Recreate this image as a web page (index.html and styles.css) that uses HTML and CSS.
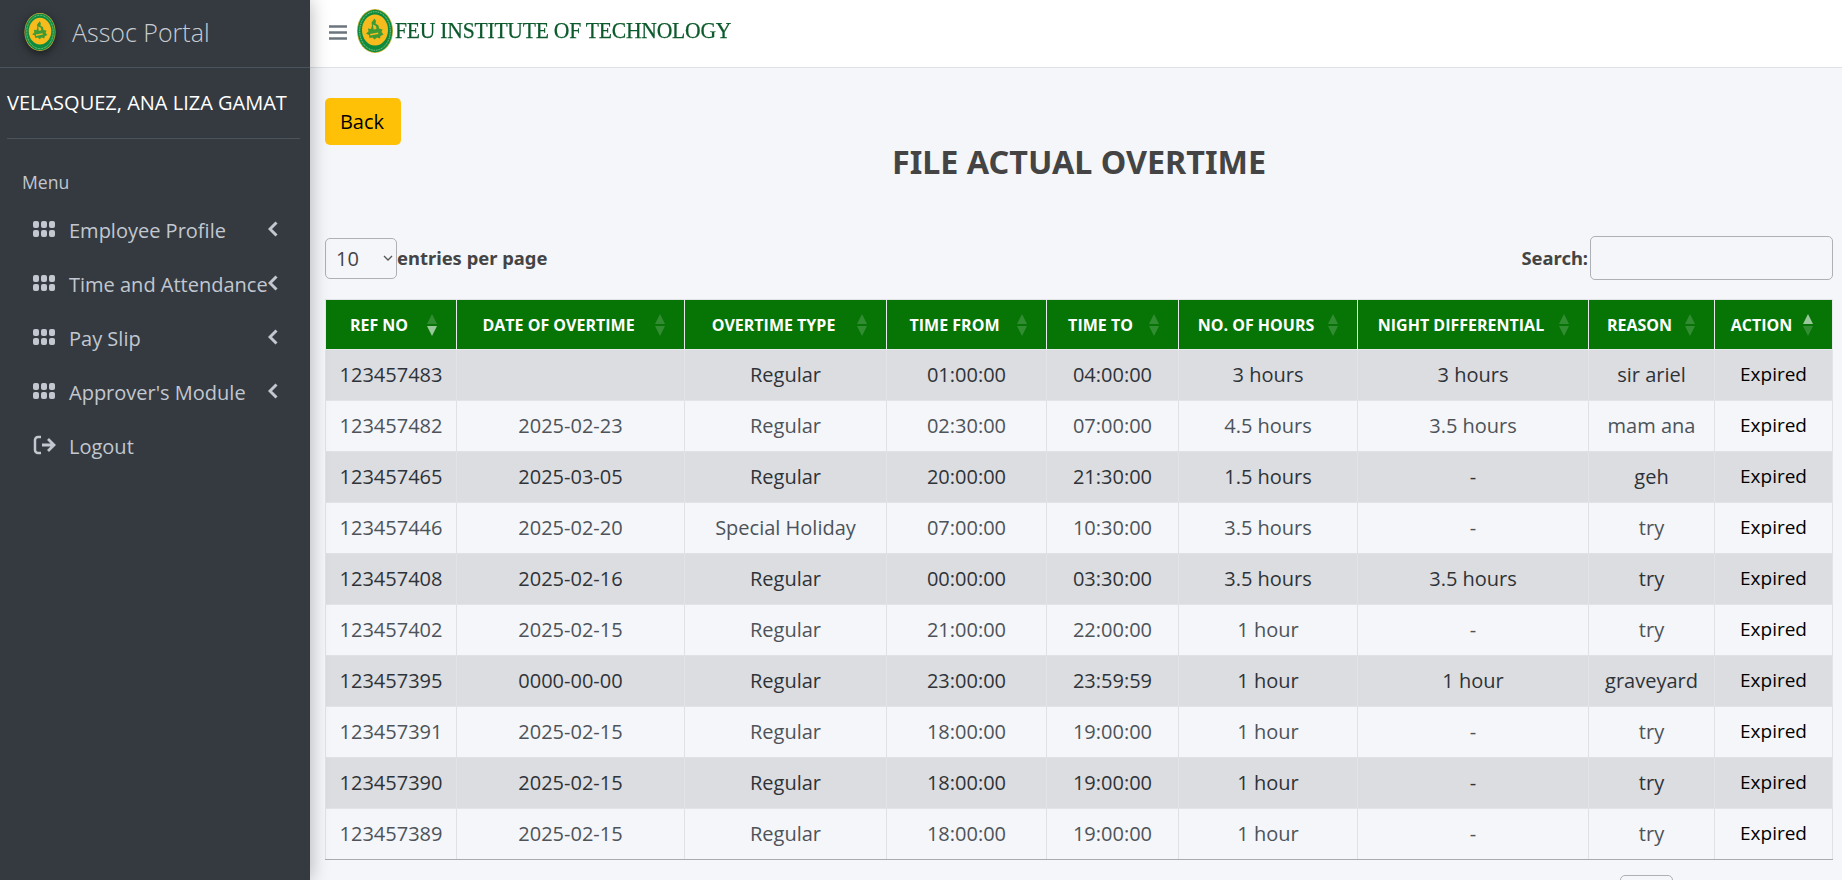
FILE: index.html
```html
<!DOCTYPE html>
<html lang="en">
<head>
<meta charset="utf-8">
<title>File Actual Overtime</title>
<link rel="stylesheet" href="styles.css">
</head>
<body>
<svg class="defs" width="0" height="0" aria-hidden="true">
  <symbol id="seal" viewBox="0 0 36 44">
    <ellipse cx="18" cy="22" rx="18" ry="22" fill="#c9b13a"/>
    <ellipse cx="18" cy="22" rx="17.300" ry="21.200" fill="#0f8a3c"/>
    <ellipse cx="18" cy="21" rx="13" ry="15.500" fill="#f7bb1e"/>
    <path d="M17.500 9.500l1.500 2.500-.5 2.500 3 2 .5 3 3.500 1-1 2.500 2 2.500-3 1.500-.5 2.500-3-1-2.500 2-2-2-3 .5-.5-3-3-1.500 2.500-2-.5-3 3 .5 1-3.500-.5-3z" fill="#3d9a35"/>
    <path d="M16 15.500l3 1.500.5 3-3 .5zM13 25l8-1.500.5 1.500-8 1.500z" fill="#f7bb1e"/>
    <ellipse cx="18" cy="22" rx="15.300" ry="19.300" fill="none" stroke="#d9e9c4" stroke-width=".8" stroke-dasharray=".9 .9"/>
  </symbol>
  <symbol id="grid" viewBox="0 0 22 16">
    <rect x="0" y="0" width="6" height="7" rx="2"/><rect x="8" y="0" width="6" height="7" rx="2"/><rect x="16" y="0" width="6" height="7" rx="2"/>
    <rect x="0" y="9" width="6" height="7" rx="2"/><rect x="8" y="9" width="6" height="7" rx="2"/><rect x="16" y="9" width="6" height="7" rx="2"/>
  </symbol>
  <symbol id="chev" viewBox="0 0 10 16"><path d="M8.500 1.500L2 8l6.500 6.500" fill="none" stroke="currentColor" stroke-width="3"/></symbol>
</svg>
<div class="app">
  <aside class="sidebar">
    <div class="brand">
      <svg class="brand-logo"><use href="#seal"/></svg>
      <span class="brand-text">Assoc Portal</span>
    </div>
    <div class="user">VELASQUEZ, ANA LIZA GAMAT</div>
    <nav class="nav">
      <div class="nav-head">Menu</div>
      <a class="nav-item"><svg class="nav-icon"><use href="#grid"/></svg><span class="nav-label">Employee Profile</span><svg class="nav-chev"><use href="#chev"/></svg></a>
      <a class="nav-item"><svg class="nav-icon"><use href="#grid"/></svg><span class="nav-label">Time and Attendance</span><svg class="nav-chev"><use href="#chev"/></svg></a>
      <a class="nav-item"><svg class="nav-icon"><use href="#grid"/></svg><span class="nav-label">Pay Slip</span><svg class="nav-chev"><use href="#chev"/></svg></a>
      <a class="nav-item"><svg class="nav-icon"><use href="#grid"/></svg><span class="nav-label">Approver's Module</span><svg class="nav-chev"><use href="#chev"/></svg></a>
      <a class="nav-item"><svg class="nav-icon logout" viewBox="0 0 24 20"><path d="M8 2H5a3 3 0 0 0-3 3v10a3 3 0 0 0 3 3h3" fill="none" stroke="currentColor" stroke-width="2.500"/><path d="M9 10h12M15 4l6 6-6 6" fill="none" stroke="currentColor" stroke-width="2.800"/></svg><span class="nav-label nav-label-logout">Logout</span></a>
    </nav>
  </aside>
  <div class="main">
    <header class="topbar">
      <svg class="burger" viewBox="0 0 18 15"><path d="M0 1.500h18M0 7.500h18M0 13.500h18" stroke="#6c757d" stroke-width="2.500"/></svg>
      <svg class="top-logo"><use href="#seal"/></svg>
      <span class="top-name">FEU INSTITUTE OF TECHNOLOGY</span>
    </header>
    <main class="content">
      <button class="back">Back</button>
      <h1 class="title">FILE ACTUAL OVERTIME</h1>
      <div class="controls">
        <label class="entries"><span class="fake-select">10<svg class="sel-chev" viewBox="0 0 10 6"><path d="M1 1l4 4 4-4" fill="none" stroke="#555" stroke-width="1.300"/></svg></span><span class="ctl-text">entries per page</span></label>
        <label class="search"><span class="ctl-text">Search:</span><input class="search-input" type="text"></label>
      </div>
      <table class="grid">
        <thead>
          <tr>
            <th class="sort-down">REF NO</th>
            <th>DATE OF OVERTIME</th>
            <th>OVERTIME TYPE</th>
            <th>TIME FROM</th>
            <th>TIME TO</th>
            <th>NO. OF HOURS</th>
            <th>NIGHT DIFFERENTIAL</th>
            <th>REASON</th>
            <th class="sort-up">ACTION</th>
          </tr>
        </thead>
        <tbody>
          <tr><td>123457483</td><td></td><td>Regular</td><td>01:00:00</td><td>04:00:00</td><td>3 hours</td><td>3 hours</td><td>sir ariel</td><td class="act">Expired</td></tr>
          <tr><td>123457482</td><td>2025-02-23</td><td>Regular</td><td>02:30:00</td><td>07:00:00</td><td>4.5 hours</td><td>3.5 hours</td><td>mam ana</td><td class="act">Expired</td></tr>
          <tr><td>123457465</td><td>2025-03-05</td><td>Regular</td><td>20:00:00</td><td>21:30:00</td><td>1.5 hours</td><td>-</td><td>geh</td><td class="act">Expired</td></tr>
          <tr><td>123457446</td><td>2025-02-20</td><td>Special Holiday</td><td>07:00:00</td><td>10:30:00</td><td>3.5 hours</td><td>-</td><td>try</td><td class="act">Expired</td></tr>
          <tr><td>123457408</td><td>2025-02-16</td><td>Regular</td><td>00:00:00</td><td>03:30:00</td><td>3.5 hours</td><td>3.5 hours</td><td>try</td><td class="act">Expired</td></tr>
          <tr><td>123457402</td><td>2025-02-15</td><td>Regular</td><td>21:00:00</td><td>22:00:00</td><td>1 hour</td><td>-</td><td>try</td><td class="act">Expired</td></tr>
          <tr><td>123457395</td><td>0000-00-00</td><td>Regular</td><td>23:00:00</td><td>23:59:59</td><td>1 hour</td><td>1 hour</td><td>graveyard</td><td class="act">Expired</td></tr>
          <tr><td>123457391</td><td>2025-02-15</td><td>Regular</td><td>18:00:00</td><td>19:00:00</td><td>1 hour</td><td>-</td><td>try</td><td class="act">Expired</td></tr>
          <tr><td>123457390</td><td>2025-02-15</td><td>Regular</td><td>18:00:00</td><td>19:00:00</td><td>1 hour</td><td>-</td><td>try</td><td class="act">Expired</td></tr>
          <tr><td>123457389</td><td>2025-02-15</td><td>Regular</td><td>18:00:00</td><td>19:00:00</td><td>1 hour</td><td>-</td><td>try</td><td class="act">Expired</td></tr>
        </tbody>
      </table>
      <div class="pager"><span class="pager-box"></span></div>
    </main>
  </div>
</div>
</body>
</html>
```
FILE: styles.css
```css
* { box-sizing: border-box; }
html, body { margin: 0; height: 100%; overflow: hidden; }
body { font-family: "Open Sans", "Noto Sans", sans-serif; font-size: 20px; color: #212529; background: #f4f6f9; }
.defs { position: absolute; }
.app { display: flex; height: 880px; }
.sidebar { width: 310px; flex: none; background: #343a40; color: #c2c7d0; box-shadow: 0 0 18px rgba(0,0,0,.3); z-index: 2; }
.brand { height: 68px; display: flex; align-items: center; padding-left: 24px; border-bottom: 1px solid #4b545c; }
.brand-logo { width: 32px; height: 38px; margin-top: -4px; filter: drop-shadow(0 3px 5px rgba(0,0,0,.5)); }
.brand-text { margin-left: 16px; margin-top: -3px; font-weight: 300; font-size: 25px; color: #c8ccd2; white-space: nowrap; }
.user { margin: 0 10px 0 7px; height: 71px; line-height: 69px; border-bottom: 1px solid #4b545c; color: #fff; font-size: 20px; white-space: nowrap; }
.nav { padding-top: 29px; }
.nav-head { padding-left: 22px; font-size: 17.600px; line-height: 28px; height: 35px; }
.nav-item { display: flex; align-items: center; height: 54px; padding-left: 33px; font-size: 20px; color: #c2c7d0; }
.nav-icon { width: 22px; height: 16px; fill: #c2c7d0; margin-top: -2px; flex: none; }
.nav-icon.logout { width: 24px; height: 20px; }
.nav-label { margin-left: 14px; white-space: nowrap; width: 199px; }
.nav-label-logout { margin-left: 12px; }
.nav-chev { width: 10px; height: 16px; color: #c2c7d0; margin-top: -2px; flex: none; }
.main { flex: 1; min-width: 0; display: flex; flex-direction: column; }
.topbar { height: 68px; flex: none; background: #fff; border-bottom: 1px solid #dee2e6; display: flex; align-items: center; padding-left: 19px; }
.burger { width: 18px; height: 15px; flex: none; margin-top: -2px; }
.top-logo { width: 36px; height: 44px; margin-left: 10px; margin-top: -6px; flex: none; }
.top-name { margin-top: -5px; margin-left: 2px; font-family: "Liberation Serif", serif; font-size: 23px; color: #0c5a2c; letter-spacing: -.25px; white-space: nowrap; transform: scaleX(.94); transform-origin: left center; -webkit-text-stroke: .25px #0c5a2c; }
.content { padding: 30px 9px 0 15px; }
.back { display: block; width: 76px; height: 47px; background: #ffc107; border: 0; border-radius: 5px; font: 20px "Open Sans", sans-serif; color: #000; padding: 0 2px 0 0; }
.title { margin: -2px 0 0; height: 93px; text-align: center; font-family: "Noto Sans", sans-serif; font-weight: 700; font-size: 32.300px; line-height: 36px; color: #444; }
.controls { display: flex; justify-content: space-between; align-items: center; height: 44px; font-family: "Noto Sans", sans-serif; font-weight: 700; font-size: 18.400px; color: #444; }
.entries, .search { display: flex; align-items: center; }
.ctl-text { margin-top: -2px; }
.fake-select { display: flex; align-items: center; justify-content: space-between; width: 72px; height: 41px; border: 1px solid #adb0b5; border-radius: 5px; padding: 0 3px 0 10px; font: 20px "Open Sans", sans-serif; font-weight: 400; color: #444; }
.sel-chev { width: 10px; height: 6px; }
.search-input { width: 243px; height: 44px; margin-left: 2px; border: 1px solid #adb0b5; border-radius: 5px; background: #f4f6f9; }
.grid { margin-top: 19px; width: 1507px; table-layout: fixed; border-collapse: collapse; }
.grid th { position: relative; height: 50px; background: #067506; color: #fff; font-size: 16px; font-weight: 700; text-align: center; border: 1px solid #e8e9ec; border-top-color: #e0e2e6; padding: 0 32px 0 8px; white-space: nowrap; }
.grid th::before, .grid th::after { content: ""; position: absolute; right: 19px; width: 0; height: 0; border-left: 5px solid transparent; border-right: 5px solid transparent; }
.grid th::before { top: 14px; border-bottom: 10px solid rgba(255,255,255,.18); }
.grid th::after { top: 26px; border-top: 10px solid rgba(255,255,255,.18); }
.grid th.sort-down::after { border-top-color: rgba(255,255,255,.6); }
.grid th.sort-up::before { border-bottom-color: rgba(255,255,255,.6); }
.grid th:nth-child(1) { width: 131px; }
.grid th:nth-child(2) { width: 228px; }
.grid th:nth-child(3) { width: 202px; }
.grid th:nth-child(4) { width: 160px; }
.grid th:nth-child(5) { width: 132px; }
.grid th:nth-child(6) { width: 179px; }
.grid th:nth-child(7) { width: 231px; }
.grid th:nth-child(8) { width: 126px; }
.grid th:nth-child(9) { width: 118px; }
.grid td { height: 51px; padding: 0 0 2px; text-align: center; border: 1px solid #dee2e6; border-top: 0; font-size: 20px; color: #4d5359; white-space: nowrap; }
.grid tbody tr:nth-child(odd) td { background: #dcdde1; color: #2e3338; border-color: #e2e3e7; }
.grid tbody tr:last-child td { border-bottom: 1px solid #a9abaf; }
.grid td.act, .grid tbody tr:nth-child(odd) td.act { color: #000; font-size: 19px; }
.pager { display: flex; justify-content: flex-end; padding: 15px 160px 0 0; }
.pager-box { width: 53px; height: 40px; border: 1px solid #adb0b5; border-radius: 5px; }
```
